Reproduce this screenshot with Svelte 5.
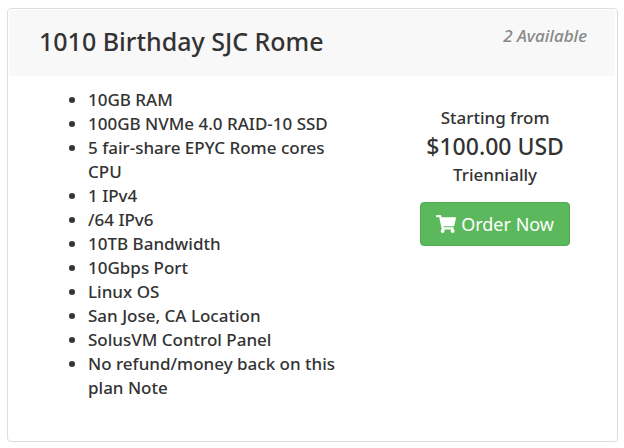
<script>
  const features = [
    '10GB RAM',
    '100GB NVMe 4.0 RAID-10 SSD',
    '5 fair-share EPYC Rome cores CPU',
    '1 IPv4',
    '/64 IPv6',
    '10TB Bandwidth',
    '10Gbps Port',
    'Linux OS',
    'San Jose, CA Location',
    'SolusVM Control Panel',
    'No refund/money back on this plan Note',
  ];
</script>

<article class="product">
  <header>
    <h2>1010 Birthday SJC Rome</h2>
    <span class="qty">2 Available</span>
  </header>
  <div class="body">
    <ul>
      {#each features as feature}
        <li>{feature}</li>
      {/each}
    </ul>
    <footer>
      <div class="pricing">
        <div>Starting from</div>
        <div class="price">$100.00 USD</div>
        <div>Triennially</div>
      </div>
      <a class="order" href="#order">
        <svg viewBox="0 0 576 512" aria-hidden="true">
          <path d="M528.12 301.319l47.273-208C578.806 78.301 567.391 64 551.99 64H159.208l-9.166-44.81C147.758 8.021 137.93 0 126.529 0H24C10.745 0 0 10.745 0 24v16c0 13.255 10.745 24 24 24h69.883l70.248 343.435C147.325 417.1 136 435.222 136 456c0 30.928 25.072 56 56 56s56-25.072 56-56c0-15.674-6.447-29.835-16.824-40h209.647C430.447 426.165 424 440.326 424 456c0 30.928 25.072 56 56 56s56-25.072 56-56c0-22.172-12.888-41.332-31.579-50.405l5.517-24.276c3.413-15.018-8.002-29.319-23.403-29.319H218.117l-6.545-32h293.145c11.206 0 20.92-7.754 23.403-18.681z" />
        </svg>
        Order Now
      </a>
    </footer>
  </div>
</article>

<style>
  :global(body) {
    background: #fff;
    color: #333;
    font-family: 'Noto Sans', 'Open Sans', sans-serif;
    font-size: 17px;
    font-weight: 500;
    line-height: 24px;
  }
  .product {
    margin: 8px 6px 6px 7px;
    padding: 1px 2px 41px 1px;
    border: 1px solid #ddd;
    border-radius: 4px;
  }
  header {
    display: flex;
    justify-content: space-between;
    padding: 14px 28px 18px 30px;
    border-radius: 3px 3px 0 0;
    background: #f8f8f8;
  }
  h2 {
    margin: 0;
    font-size: 25px;
    font-weight: 500;
    line-height: 34px;
  }
  .qty {
    color: #888;
    font-style: italic;
  }
  .body {
    display: flex;
    justify-content: space-between;
    padding: 12px 45px 0 39px;
  }
  ul {
    box-sizing: border-box;
    width: 300px;
    margin: 0;
    padding-left: 40px;
  }
  footer {
    padding-top: 18px;
    text-align: center;
  }
  .pricing {
    margin-bottom: 15px;
  }
  .price {
    font-size: 23px;
    line-height: 33px;
  }
  .order {
    display: flex;
    align-items: center;
    gap: 5px;
    padding: 8px 15px;
    border: 1px solid #4cae4c;
    border-radius: 4px;
    background: #5cb85c;
    color: #fff;
    font-size: 18px;
    font-weight: 400;
    line-height: 26px;
    text-decoration: none;
  }
  svg {
    width: 20px;
    height: 18px;
    fill: currentColor;
  }
</style>
